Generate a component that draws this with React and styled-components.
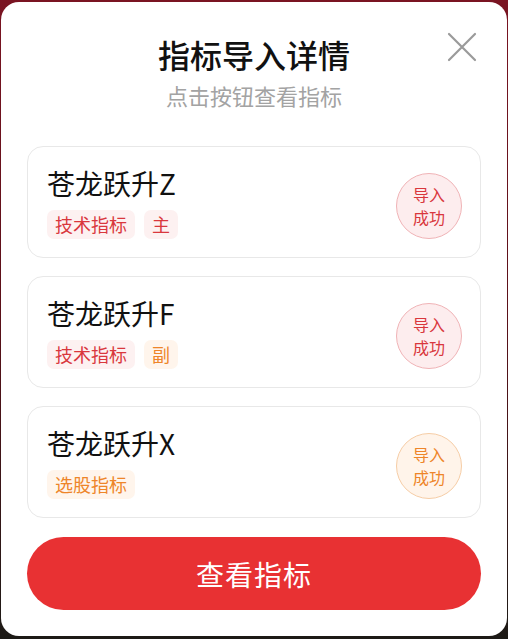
import styled, { createGlobalStyle } from "styled-components";

const GlobalStyle = createGlobalStyle`
  html, body {
    margin: 0;
    padding: 0;
  }
  body {
    width: 508px;
    height: 639px;
    overflow: hidden;
    background: linear-gradient(180deg, #7a1422 0%, #5a1018 50%, #1c1a16 100%);
    font-family: "Noto Sans CJK SC", "Noto Sans", sans-serif;
  }
`;

const palette = {
  red: { text: "#d9373d", tag: "#fdf1f1", ring: "#f0b3b6", fill: "#fdedee" },
  orange: { text: "#ee8529", tag: "#fff5ec", ring: "#f6cda6", fill: "#fff4ea" },
};

const Modal = styled.div`
  position: relative;
  box-sizing: border-box;
  margin: 2px 1px 0;
  height: 634px;
  background: #ffffff;
  border-radius: 18px;
  padding: 32px 26px 0;
  display: flex;
  flex-direction: column;
`;

const Header = styled.header`
  display: flex;
  flex-direction: column;
  align-items: center;
  gap: 6px;
  margin-bottom: 36px;
`;

const Title = styled.h1`
  margin: 0;
  font-size: 32px;
  line-height: 40px;
  font-weight: 500;
  color: #111111;
`;

const Subtitle = styled.p`
  margin: 0;
  font-size: 22px;
  line-height: 30px;
  color: #a3a3a3;
`;

const CloseButton = styled.button`
  position: absolute;
  top: 29px;
  right: 29px;
  width: 32px;
  height: 32px;
  padding: 0;
  border: none;
  background: transparent;
  display: flex;
  align-items: center;
  justify-content: center;
`;

const List = styled.div`
  display: flex;
  flex-direction: column;
  gap: 18px;
`;

const Card = styled.div`
  box-sizing: border-box;
  height: 112px;
  border: 1px solid #e8e8e8;
  border-radius: 16px;
  padding: 0 18px 0 19px;
  display: flex;
  align-items: center;
  justify-content: space-between;
`;

const Info = styled.div`
  display: flex;
  flex-direction: column;
  gap: 10px;
`;

const Name = styled.div`
  font-size: 28px;
  line-height: 34px;
  color: #111111;
`;

const Tags = styled.div`
  display: flex;
  gap: 9px;
`;

const Tag = styled.span`
  height: 29px;
  padding: 0 8px;
  border-radius: 7px;
  font-size: 18px;
  line-height: 29px;
  color: ${({ $tone }) => palette[$tone].text};
  background: ${({ $tone }) => palette[$tone].tag};
`;

const Stamp = styled.div`
  box-sizing: border-box;
  width: 66px;
  height: 66px;
  margin-top: 8px;
  border-radius: 50%;
  border: 1px solid ${({ $tone }) => palette[$tone].ring};
  background: ${({ $tone }) => palette[$tone].fill};
  color: ${({ $tone }) => palette[$tone].text};
  font-size: 16px;
  line-height: 23.5px;
  display: flex;
  flex-direction: column;
  align-items: center;
  justify-content: center;
`;

const ViewButton = styled.button`
  margin-top: 19px;
  height: 73px;
  border: none;
  border-radius: 37px;
  background: #e83133;
  color: #ffffff;
  font-family: inherit;
  font-size: 28px;
  letter-spacing: 1px;
`;

const items = [
  { name: "苍龙跃升Z", tags: [["技术指标", "red"], ["主", "red"]], tone: "red" },
  { name: "苍龙跃升F", tags: [["技术指标", "red"], ["副", "orange"]], tone: "red" },
  { name: "苍龙跃升X", tags: [["选股指标", "orange"]], tone: "orange" },
];

const App = () => (
  <>
    <GlobalStyle />
    <Modal>
      <CloseButton aria-label="关闭">
        <svg width="30" height="30" viewBox="0 0 30 30">
          <path d="M2 2L28 28M28 2L2 28" stroke="#9a9a9a" strokeWidth="2.2" strokeLinecap="round" />
        </svg>
      </CloseButton>
      <Header>
        <Title>指标导入详情</Title>
        <Subtitle>点击按钮查看指标</Subtitle>
      </Header>
      <List>
        {items.map((item) => (
          <Card key={item.name}>
            <Info>
              <Name>{item.name}</Name>
              <Tags>
                {item.tags.map(([label, tone]) => (
                  <Tag key={label} $tone={tone}>{label}</Tag>
                ))}
              </Tags>
            </Info>
            <Stamp $tone={item.tone}>
              <span>导入</span>
              <span>成功</span>
            </Stamp>
          </Card>
        ))}
      </List>
      <ViewButton>查看指标</ViewButton>
    </Modal>
  </>
);

export default App;
